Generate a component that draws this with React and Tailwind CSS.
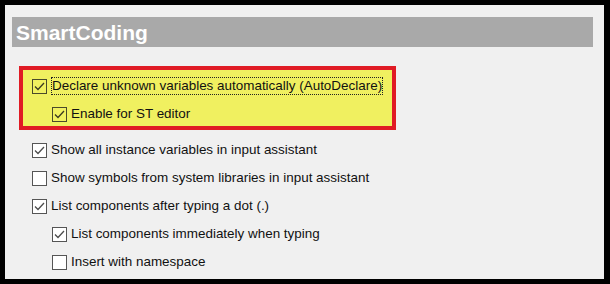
import React from 'react';

const options = [
  { label: 'Show all instance variables in input assistant', checked: true, nested: false },
  { label: 'Show symbols from system libraries in input assistant', checked: false, nested: false },
  { label: 'List components after typing a dot (.)', checked: true, nested: false },
  { label: 'List components immediately when typing', checked: true, nested: true },
  { label: 'Insert with namespace', checked: false, nested: true },
];

function Checkbox({ checked, onYellow }) {
  return (
    <span
      className={`flex h-[15px] w-[15px] shrink-0 items-center justify-center border ${
        onYellow ? 'border-[#4a4a2a] bg-transparent' : 'border-[#555] bg-white'
      }`}
    >
      {checked && (
        <svg width="13" height="13" viewBox="0 0 13 13">
          <polyline points="2,6.5 5,9.5 11,3" fill="none" stroke={onYellow ? '#3a3a20' : '#4d4d4d'} strokeWidth="1.3" />
        </svg>
      )}
    </span>
  );
}

function Row({ label, checked, nested, onYellow, focused }) {
  return (
    <div className={`flex h-[16px] items-center gap-[4px] ${nested ? 'pl-[20px]' : ''}`}>
      <Checkbox checked={checked} onYellow={onYellow} />
      <span
        className={`whitespace-nowrap leading-[16px] ${
          focused ? 'border border-dotted border-[#222]' : ''
        }`}
      >
        {label}
      </span>
    </div>
  );
}

export default function App() {
  return (
    <div className="h-[284px] w-[610px] bg-black pt-[5px] pb-[5px] pl-[5px] pr-[6px]">
      <div
        className="flex h-full flex-col bg-[#f0f0f0] text-[13.45px] text-[#111]"
        style={{ fontFamily: '"Liberation Sans", Arial, sans-serif' }}
      >
        {/* Section header */}
        <div className="ml-[7px] mr-[11px] mt-[12px] flex h-[30px] items-center bg-[#a9a9a9] pl-[4px]">
          <span className="text-[21px] font-bold leading-none text-white">SmartCoding</span>
        </div>

        {/* Highlighted options */}
        <div className="ml-[14px] mt-[19px] flex h-[64px] w-[377px] flex-col gap-[12px] border-[4px] border-[#e01b24] bg-[#f0f060] pl-[9px] pt-[8px]">
          <Row label="Declare unknown variables automatically (AutoDeclare)" checked onYellow focused />
          <Row label="Enable for ST editor" checked nested onYellow />
        </div>

        {/* Other options */}
        <div className="ml-[27px] mt-[12px] flex flex-col gap-[12px]">
          {options.map((o) => (
            <Row key={o.label} label={o.label} checked={o.checked} nested={o.nested} />
          ))}
        </div>
      </div>
    </div>
  );
}
